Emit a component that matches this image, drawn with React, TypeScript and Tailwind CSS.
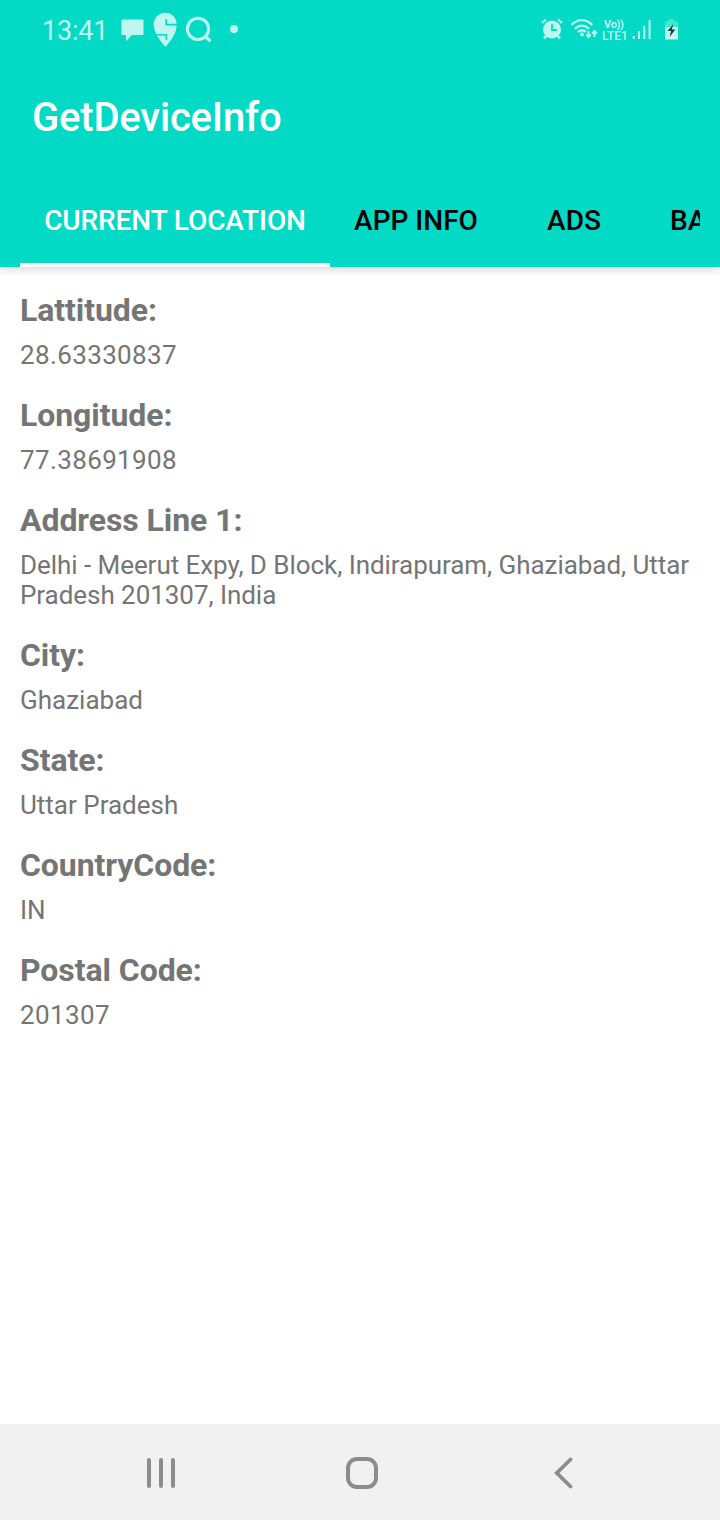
const rows: { label: string; value: string; tracking: string }[] = [
  { label: 'Lattitude:', value: '28.63330837', tracking: 'tracking-[0.37px]' },
  { label: 'Longitude:', value: '77.38691908', tracking: 'tracking-[0.37px]' },
  {
    label: 'Address Line 1:',
    value: 'Delhi - Meerut Expy, D Block, Indirapuram, Ghaziabad, Uttar Pradesh 201307, India',
    tracking: 'tracking-[-0.05px]',
  },
  { label: 'City:', value: 'Ghaziabad', tracking: 'tracking-normal' },
  { label: 'State:', value: 'Uttar Pradesh', tracking: 'tracking-normal' },
  { label: 'CountryCode:', value: 'IN', tracking: 'tracking-normal' },
  { label: 'Postal Code:', value: '201307', tracking: 'tracking-[0.37px]' },
];

function StatusBar() {
  return (
    <div className="flex h-[60px] shrink-0 items-center text-[#bff6f0]">
      <span className="ml-[42px] w-[78px] pt-0.5 text-[27px] leading-[32px] tracking-[-0.2px]">13:41</span>
      <svg className="h-[60px] w-6 shrink-0" viewBox="120 0 24 60" fill="currentColor">
        <path d="M122.5 19.5h20q1 0 1 1v13.5q0 1-1 1h-10.500L126 41v-6h-3.500q-1 0-1-1V20.500q0-1 1-1z" />
      </svg>
      <svg className="ml-2 h-[60px] w-[28px] shrink-0" viewBox="152 0 28 60" fill="none">
        <path
          d="M165.300 12.700c-6.500 0-11.600 5-11.600 11.300 0 9 6.500 16.500 11.800 23 5.300-6.500 11.200-13.500 11.200-22.500 0-7-5-11.800-11.400-11.800z"
          fill="currentColor"
        />
        <path d="M166.200 19v5.600h11.500M155 34.800h11.300v5" stroke="#03dac5" strokeWidth="1.600" />
      </svg>
      <svg className="ml-1 h-[60px] w-[30px] shrink-0" viewBox="184 0 30 60" fill="none" stroke="currentColor">
        <circle cx="198" cy="28.900" r="10.600" strokeWidth="3" />
        <path d="m205.500 36.500 4 3.700" strokeWidth="3.400" strokeLinecap="round" />
      </svg>
      <svg className="ml-4 h-[60px] w-2 shrink-0" viewBox="230 0 8 60" fill="currentColor">
        <circle cx="234" cy="29" r="4" />
      </svg>
      <svg className="ml-auto h-[60px] w-6 shrink-0" viewBox="540 0 24 60" fill="none" stroke="currentColor">
        <circle cx="552" cy="29.500" r="9" fill="currentColor" stroke="none" />
        <path d="m542 23 4-3.500m16 3.500-4-3.500" strokeWidth="2.200" />
        <path d="m546.500 35.500-2.500 3m13.500-3 2.500 3" strokeWidth="2.500" />
        <path d="M552 24.300V30h5" stroke="#03dac5" strokeWidth="1.800" />
      </svg>
      <svg className="ml-1.5 h-[60px] w-7 shrink-0" viewBox="570 0 28 60" fill="none" stroke="currentColor" strokeWidth="2.300">
        <path d="M571.500 24.800q10.300-9.300 20.800 0M574.800 28.800q7.200-6.300 14.300 0M578 32q4-3 8-.2" />
        <circle cx="582" cy="34.500" r="1.900" fill="currentColor" stroke="none" />
        <path d="M588.500 31v6m-2.400-2.400 2.400 2.600 2.400-2.600M594.500 37v-6m-2.400 2.400 2.400-2.600 2.400 2.600" strokeWidth="1.900" />
      </svg>
      <div className="ml-1 flex w-[28px] shrink-0 flex-col items-start text-[11px] font-bold">
        <span className="pl-[2px] leading-[11px] tracking-[-0.3px]">Vo))</span>
        <span className="text-[12px] leading-[12px] font-medium">LTE1</span>
      </div>
      <svg className="ml-[2px] h-[60px] w-5 shrink-0" viewBox="632 0 20 60" fill="currentColor">
        <path d="M632.700 36h2v3h-2zM638 31h2v8h-2zM643.300 26h2v13h-2zM648.600 20h2v19h-2z" />
      </svg>
      <svg className="mr-10 ml-3 h-[60px] w-4 shrink-0" viewBox="664 0 16 60" fill="currentColor">
        <path d="M668.500 19h6v2.500h3.500V28h-13v-6.500h3.500z" opacity=".35" />
        <path d="M665 27h13v12.500h-13z" />
        <path d="m673.300 24-5.700 7.100h3.500l-1.500 5.900 5.700-7.500h-3.500z" fill="#073f3c" />
      </svg>
    </div>
  );
}

export default function App() {
  return (
    <div className="flex h-[1520px] w-[720px] flex-col overflow-hidden bg-white font-['Roboto',sans-serif]">
      <header className="flex h-[267px] shrink-0 flex-col bg-[#03dac5] shadow-[0_3px_8px_rgba(0,0,0,0.14)]">
        <StatusBar />
        <h1 className="flex h-[114px] items-center pt-px pl-8 text-[40px] font-medium tracking-[-0.2px] text-white">GetDeviceInfo</h1>
        <nav className="mx-5 flex h-[93px] overflow-hidden text-[28px] font-medium whitespace-nowrap text-black">
          <div className="flex w-[310px] shrink-0 items-center justify-center border-b-4 border-white pt-1 tracking-[-0.1px] text-white">
            CURRENT LOCATION
          </div>
          <div className="flex w-[172px] shrink-0 items-center justify-center">APP INFO</div>
          <div className="flex w-[144px] shrink-0 items-center justify-center">ADS</div>
          <div className="flex shrink-0 items-center pl-6">BA</div>
        </nav>
      </header>
      <main className="flex-1 px-5 pt-6 text-[#757575]">
        {rows.map((row) => (
          <section key={row.label} className="mb-[26px]">
            <h2 className="text-[32px] leading-[38px] font-bold tracking-[-0.07px]">{row.label}</h2>
            <p className={`mt-[11px] text-[26px] leading-[30px] ${row.tracking}`}>{row.value}</p>
          </section>
        ))}
      </main>
      <footer className="flex h-24 shrink-0 items-center bg-[#f1f1f1] text-[#8c8c8c]">
        <svg className="ml-[146px] h-8 w-8" viewBox="0 0 32 32" fill="none" stroke="currentColor" strokeWidth="4" strokeLinecap="round">
          <path d="M3 4v26M15 4v26M27 4v26" />
        </svg>
        <svg className="ml-[167px] h-[34px] w-[34px]" viewBox="0 0 34 34" fill="none" stroke="currentColor" strokeWidth="4">
          <rect x="3" y="4" width="28" height="28" rx="9" />
        </svg>
        <svg className="ml-[175px] h-[34px] w-5" viewBox="0 0 20 34" fill="none" stroke="currentColor" strokeWidth="3.800" strokeLinecap="round">
          <path d="M16.500 4.500 2.800 18l13.700 13.500" />
        </svg>
      </footer>
    </div>
  );
}
